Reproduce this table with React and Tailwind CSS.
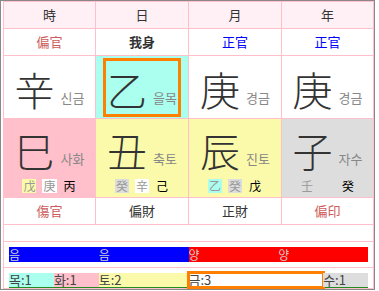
// Four pillars (saju) chart: stems, branches, hidden stems, yin-yang and element bars.
const PINK = "border-[#ffc0cb]";

const headers = ["時", "日", "月", "年"];

const topGods = [
  { text: "偏官", className: "text-[#cd5c5c]" },
  { text: "我身", className: "font-bold text-[#333]" },
  { text: "正官", className: "text-[#0000ff]" },
  { text: "正官", className: "text-[#0000ff]" },
];

const stems = [
  { char: "辛", kr: "신금" },
  { char: "乙", kr: "을목", me: true },
  { char: "庚", kr: "경금" },
  { char: "庚", kr: "경금" },
];

const branches = [
  {
    char: "巳",
    kr: "사화",
    bg: "bg-[#ffc0cb]",
    hidden: [
      { c: "戊", cls: "bg-[#fafaaa] text-[#999]" },
      { c: "庚", cls: "bg-white text-[#999]" },
      { c: "丙", cls: "text-black" },
    ],
  },
  {
    char: "丑",
    kr: "축토",
    bg: "bg-[#fafaaa]",
    hidden: [
      { c: "癸", cls: "bg-[#dddddd] text-[#999]" },
      { c: "辛", cls: "bg-white text-[#999]" },
      { c: "己", cls: "text-black" },
    ],
  },
  {
    char: "辰",
    kr: "진토",
    bg: "bg-[#fafaaa]",
    hidden: [
      { c: "乙", cls: "bg-[#aaffee] text-[#999]" },
      { c: "癸", cls: "bg-[#dddddd] text-[#999]" },
      { c: "戊", cls: "text-black" },
    ],
  },
  {
    char: "子",
    kr: "자수",
    bg: "bg-[#dddddd]",
    wide: true,
    hidden: [
      { c: "壬", cls: "text-[#999]" },
      { c: "癸", cls: "text-black" },
    ],
  },
];

const bottomGods = [
  { text: "傷官", className: "text-[#cd5c5c]" },
  { text: "偏財", className: "text-[#333]" },
  { text: "正財", className: "text-[#333]" },
  { text: "偏印", className: "text-[#cd5c5c]" },
];

const yinYang = [
  { label: "음", bg: "bg-[#0000ff]" },
  { label: "음", bg: "bg-[#0000ff]" },
  { label: "양", bg: "bg-[#ff0000]" },
  { label: "양", bg: "bg-[#ff0000]" },
];

const elements = [
  { label: "목:1", count: 1, bg: "bg-[#aaffee]" },
  { label: "화:1", count: 1, bg: "bg-[#ffc0cb]" },
  { label: "토:2", count: 2, bg: "bg-[#fafaaa]" },
  { label: "금:3", count: 3, bg: "bg-white", me: true },
  { label: "수:1", count: 1, bg: "bg-[#dddddd]" },
];

function StemBody({ char, kr }) {
  return (
    <div className="flex items-end justify-center gap-[6px]">
      <span className="text-[40px] font-light leading-[48px] text-[#333]">{char}</span>
      <span className="mb-[8px] text-[13px] leading-[15px] text-[#888]">{kr}</span>
    </div>
  );
}

export default function App() {
  return (
    <div
      className="h-[290px] w-[375px] border border-[#888] bg-white pl-[2px] pt-0"
      style={{ fontFamily: '"Noto Sans CJK KR", "Noto Sans", sans-serif' }}
    >
      <table className={`w-[370px] table-fixed border-collapse border ${PINK}`}>
        <colgroup>
          <col className="w-[92px]" />
          <col className="w-[93px]" />
          <col className="w-[93px]" />
          <col className="w-[92px]" />
        </colgroup>
        <tbody>
          <tr className="h-[27px] bg-[#fff0f5]">
            {headers.map((h) => (
              <td key={h} className={`border ${PINK} text-center text-[13px] text-[#333]`}>
                {h}
              </td>
            ))}
          </tr>

          <tr className="h-[27px]">
            {topGods.map((g, i) => (
              <td key={i} className={`border ${PINK} text-center text-[13px] ${g.className}`}>
                {g.text}
              </td>
            ))}
          </tr>

          <tr className="h-[63px]">
            {stems.map((s, i) =>
              s.me ? (
                <td key={i} className={`border ${PINK} bg-[#aaffee] px-[7px] py-[1px]`}>
                  <div className="flex h-[59px] items-center justify-center border-[3px] border-[#ff8000] pt-[3px]">
                    <StemBody char={s.char} kr={s.kr} />
                  </div>
                </td>
              ) : (
                <td key={i} className={`border ${PINK} pt-[3px]`}>
                  <StemBody char={s.char} kr={s.kr} />
                </td>
              )
            )}
          </tr>

          <tr className="h-[79px]">
            {branches.map((b, i) => (
              <td key={i} className={`border ${PINK} ${b.bg} align-top`}>
                <div className="flex flex-col items-center pt-[7px]">
                  <StemBody char={b.char} kr={b.kr} />
                  <div
                    className={`mt-[5px] flex text-[12px] leading-[14px] ${
                      b.wide ? "gap-[27px]" : "gap-[6px]"
                    }`}
                  >
                    {b.hidden.map((h, j) => (
                      <span key={j} className={`px-[1px] ${h.cls}`}>
                        {h.c}
                      </span>
                    ))}
                  </div>
                </div>
              </td>
            ))}
          </tr>

          <tr className="h-[27px]">
            {bottomGods.map((g, i) => (
              <td key={i} className={`border ${PINK} text-center text-[13px] ${g.className}`}>
                {g.text}
              </td>
            ))}
          </tr>

          <tr className="h-[17px]">
            <td colSpan={4} className={`border ${PINK}`} />
          </tr>

          <tr className="h-[26px]">
            <td colSpan={4} className={`border ${PINK} px-[5px]`}>
              <div className="flex h-[15px]">
                {yinYang.map((y, i) => (
                  <div key={i} className={`flex-1 ${y.bg} text-[12px] leading-[15px] text-[#d0d0d0]`}>
                    {y.label}
                  </div>
                ))}
              </div>
            </td>
          </tr>

          <tr className="h-[21px]">
            <td colSpan={4} className={`border ${PINK} px-[5px] pt-[5px] align-top`}>
              <div className="flex h-[15px] border-b border-[#228b22]">
                {elements.map((e, i) => (
                  <div
                    key={i}
                    style={{ flexGrow: e.count, flexBasis: 0 }}
                    className={`${e.bg} text-[13px] leading-[14px] text-[#444] ${
                      e.me ? "outline-[3px] -outline-offset-1 outline-[#ff8000] outline" : ""
                    }`}
                  >
                    {e.label}
                  </div>
                ))}
              </div>
            </td>
          </tr>
        </tbody>
      </table>
    </div>
  );
}
